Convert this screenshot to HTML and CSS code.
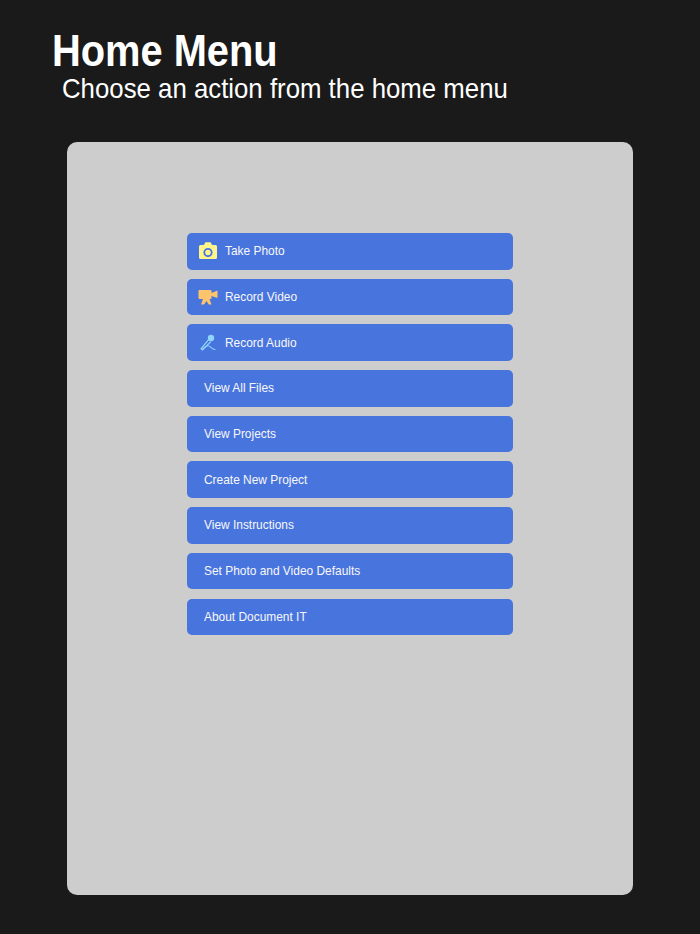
FILE: index.html
```html
<!DOCTYPE html>
<html lang="en">
<head>
    <meta charset="UTF-8">
    <meta name="viewport" content="width=device-width, initial-scale=1.0">
    <title>Home Menu</title>
    <link rel="stylesheet" href="styles.css">
</head>
<body>
    <header class="page-header">
        <h1 class="page-title"><span class="narrow">Home Menu</span></h1>
        <p class="page-subtitle"><span class="narrow">Choose an action from the home menu</span></p>
    </header>
    <main class="panel">
        <nav class="menu">
            <a class="menu-btn has-icon" href="#">
                <svg class="menu-icon" viewBox="0 0 20 20" aria-hidden="true">
                    <path fill="#fff58c" d="M6 4l1-2.200a1 1 0 0 1 .9-.6h4.200a1 1 0 0 1 .9.6L14 4h3.500A1.500 1.500 0 0 1 19 5.500v11a1.500 1.500 0 0 1-1.500 1.500h-15A1.500 1.500 0 0 1 1 16.500v-11A1.500 1.500 0 0 1 2.500 4z"/>
                    <circle cx="10" cy="11.500" r="3.700" fill="#fff58c" stroke="#4874de" stroke-width="1.800"/>
                </svg>
                <span class="narrow">Take Photo</span>
            </a>
            <a class="menu-btn has-icon" href="#">
                <svg class="menu-icon" viewBox="0 0 20 20" aria-hidden="true">
                    <path fill="#fdc46c" d="M1.500 3h11a1 1 0 0 1 1 1v2L19.500 3.500v7.500L13.500 9v2a1 1 0 0 1-1 1h-1l2 5.500H10.800L8.500 14l-2.500 3.500H3L5 12H1.500a1 1 0 0 1-1-1V4a1 1 0 0 1 1-1z"/>
                </svg>
                <span class="narrow">Record Video</span>
            </a>
            <a class="menu-btn has-icon" href="#">
                <svg class="menu-icon" viewBox="0 0 20 20" aria-hidden="true">
                    <circle cx="13" cy="5" r="3.200" fill="#8fd6fa"/>
                    <path fill="none" stroke="#8fd6fa" stroke-width="1.300" stroke-linejoin="round" d="M10.600 6.600L3 15.800l1.500 1 8.400-8.200"/>
                    <path fill="none" stroke="#8fd6fa" stroke-width="1.100" stroke-linecap="round" d="M4.500 16.800c1.800-2.200 3.700-4 5.800-4s3.500 3.700 6.700 3.700"/>
                </svg>
                <span class="narrow">Record Audio</span>
            </a>
            <a class="menu-btn" href="#"><span class="narrow">View All Files</span></a>
            <a class="menu-btn" href="#"><span class="narrow">View Projects</span></a>
            <a class="menu-btn" href="#"><span class="narrow">Create New Project</span></a>
            <a class="menu-btn" href="#"><span class="narrow">View Instructions</span></a>
            <a class="menu-btn" href="#"><span class="narrow">Set Photo and Video Defaults</span></a>
            <a class="menu-btn" href="#"><span class="narrow">About Document IT</span></a>
        </nav>
    </main>
</body>
</html>
```
FILE: styles.css
```css
body {
    font-family: "Liberation Sans", Arial, sans-serif;
    background-color: #1a1a1a;
    color: white;
    margin: 0;
    padding: 26px 0 0;
    height: 908px;
    display: flex;
    flex-direction: column;
}
.page-header {
    padding-left: 52px;
    height: 116px;
}
.page-title {
    font-size: 44px;
    line-height: 50px;
    font-weight: bold;
    margin: 0;
}
.page-subtitle {
    font-size: 28px;
    line-height: 25px;
    margin: 0;
    padding-left: 10px;
}
/* the text in the screen is a bit condensed */
.narrow {
    display: inline-block;
    transform: scaleX(0.917);
    transform-origin: left center;
    white-space: nowrap;
}
.page-title .narrow {
    transform: scaleX(0.905);
}
.page-subtitle .narrow {
    transform: scaleX(0.921);
}
.panel {
    width: 566px;
    height: 753px;
    margin: 0 auto;
    padding-top: 91px;
    box-sizing: border-box;
    background: #cdcdcd;
    border-radius: 10px;
}
.menu {
    width: 326px;
    margin: 0 auto;
    display: flex;
    flex-direction: column;
    gap: 9.2px;
}
.menu-btn {
    display: flex;
    align-items: center;
    height: 36.5px;
    box-sizing: border-box;
    padding-left: 17px;
    padding-bottom: 1px;
    background-color: #4874de;
    color: #f8f8f8;
    font-size: 13px;
    text-decoration: none;
    border-radius: 5px;
}
.menu-btn.has-icon {
    padding-left: 11px;
}
.menu-icon {
    width: 20px;
    height: 20px;
    margin-right: 7px;
    margin-bottom: -1px;
    flex-shrink: 0;
}
```
